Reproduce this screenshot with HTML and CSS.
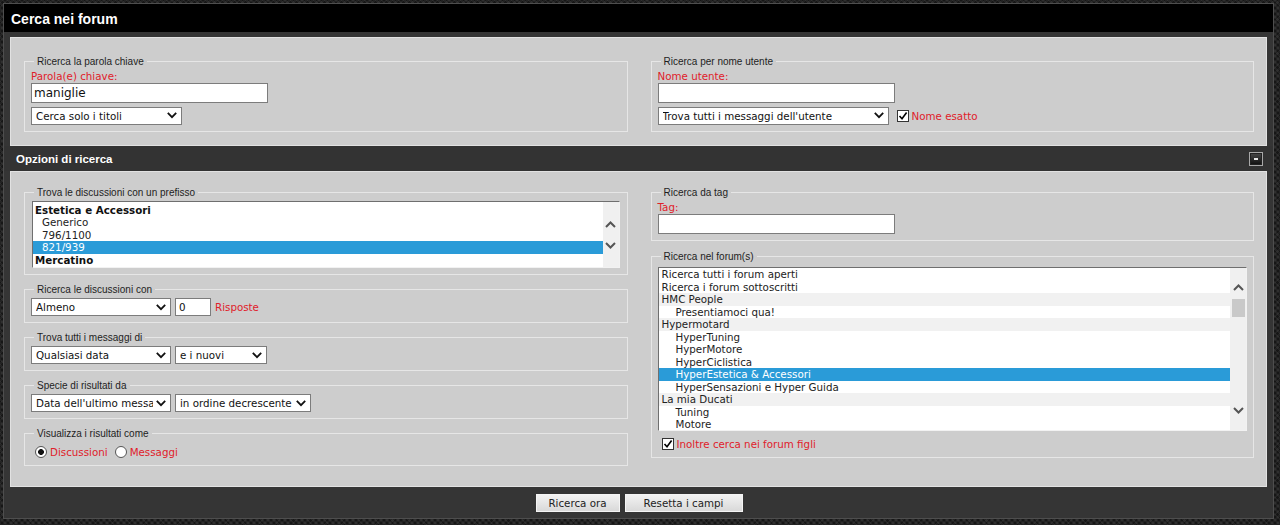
FILE: index.html
```html
<!DOCTYPE html>
<html lang="it">
<head>
<meta charset="utf-8">
<title>Cerca nei forum</title>
<link rel="stylesheet" href="styles.css">
</head>
<body>
<div class="frame">
  <div class="title-bar">Cerca nei forum</div>

  <div class="panel panel-top">
    <fieldset class="box">
      <legend>Ricerca la parola chiave</legend>
      <label class="lbl">Parola(e) chiave:</label>
      <input class="txt txt-main" type="text" value="maniglie">
      <div class="row">
        <select class="sel w151"><option>Cerca solo i titoli</option></select>
      </div>
    </fieldset>
    <fieldset class="box">
      <legend>Ricerca per nome utente</legend>
      <label class="lbl">Nome utente:</label>
      <input class="txt txt-main" type="text" value="">
      <div class="row">
        <select class="sel w231"><option>Trova tutti i messaggi dell'utente</option></select>
        <label class="chk chk-exact"><input type="checkbox" checked><span>Nome esatto</span></label>
      </div>
    </fieldset>
  </div>

  <div class="section-bar">
    <span class="section-title">Opzioni di ricerca</span>
    <span class="collapse"></span>
  </div>

  <div class="panel panel-opts">
    <div class="col col-left">
      <fieldset class="box">
        <legend>Trova le discussioni con un prefisso</legend>
        <div class="listbox lb-prefix">
          <div class="opts opts-prefix">
            <div class="opt grp">Estetica e Accessori</div>
            <div class="opt sub">Generico</div>
            <div class="opt sub">796/1100</div>
            <div class="opt sub selected">821/939</div>
            <div class="opt grp">Mercatino</div>
          </div>
          <div class="sb sb-prefix">
            <svg class="chev up" width="11" height="7" viewBox="0 0 11 7"><path d="M1 6 5.5 1.5 10 6" fill="none" stroke="#555" stroke-width="2"/></svg>
            <svg class="chev down" width="11" height="7" viewBox="0 0 11 7"><path d="M1 1 5.5 5.5 10 1" fill="none" stroke="#555" stroke-width="2"/></svg>
          </div>
        </div>
      </fieldset>

      <fieldset class="box">
        <legend>Ricerca le discussioni con</legend>
        <div class="row row-first">
          <select class="sel w140"><option>Almeno</option></select>
          <input class="txt txt-small" type="text" value="0">
          <span class="red">Risposte</span>
        </div>
      </fieldset>

      <fieldset class="box">
        <legend>Trova tutti i messaggi di</legend>
        <div class="row row-first">
          <select class="sel w140"><option>Qualsiasi data</option></select>
          <select class="sel w92"><option>e i nuovi</option></select>
        </div>
      </fieldset>

      <fieldset class="box">
        <legend>Specie di risultati da</legend>
        <div class="row row-first">
          <select class="sel w140"><option>Data dell'ultimo messaggio</option></select>
          <select class="sel w136"><option>in ordine decrescente</option></select>
        </div>
      </fieldset>

      <fieldset class="box">
        <legend>Visualizza i risultati come</legend>
        <div class="radios">
          <label class="rad"><input type="radio" name="show" checked><span>Discussioni</span></label>
          <label class="rad"><input type="radio" name="show"><span>Messaggi</span></label>
        </div>
      </fieldset>
    </div>

    <div class="col col-right">
      <fieldset class="box">
        <legend>Ricerca da tag</legend>
        <label class="lbl">Tag:</label>
        <input class="txt txt-main" type="text" value="">
      </fieldset>

      <fieldset class="box">
        <legend>Ricerca nel forum(s)</legend>
        <div class="listbox lb-forum">
          <div class="opts">
            <div class="opt top">Ricerca tutti i forum aperti</div>
            <div class="opt top">Ricerca i forum sottoscritti</div>
            <div class="opt cat">HMC People</div>
            <div class="opt child">Presentiamoci qua!</div>
            <div class="opt cat">Hypermotard</div>
            <div class="opt child">HyperTuning</div>
            <div class="opt child">HyperMotore</div>
            <div class="opt child">HyperCiclistica</div>
            <div class="opt child selected">HyperEstetica &amp; Accessori</div>
            <div class="opt child">HyperSensazioni e Hyper Guida</div>
            <div class="opt cat">La mia Ducati</div>
            <div class="opt child">Tuning</div>
            <div class="opt child">Motore</div>
          </div>
          <div class="sb sb-forum">
            <svg class="chev up" width="11" height="7" viewBox="0 0 11 7"><path d="M1 6 5.5 1.5 10 6" fill="none" stroke="#555" stroke-width="2"/></svg>
            <span class="thumb"></span>
            <svg class="chev down" width="11" height="7" viewBox="0 0 11 7"><path d="M1 1 5.5 5.5 10 1" fill="none" stroke="#555" stroke-width="2"/></svg>
          </div>
        </div>
        <label class="chk chk-children"><input type="checkbox" checked><span>Inoltre cerca nei forum figli</span></label>
      </fieldset>
    </div>
  </div>

  <div class="actions">
    <button class="btn btn-search" type="button">Ricerca ora</button>
    <button class="btn btn-reset" type="button">Resetta i campi</button>
  </div>
</div>
</body>
</html>
```

FILE: styles.css
```css
* { box-sizing: border-box; }

html, body { height: 100%; }

body {
  margin: 0;
  background-color: #222;
  background-image:
    repeating-linear-gradient(45deg, rgba(255,255,255,0.06) 0 2px, transparent 2px 4px),
    repeating-linear-gradient(-45deg, rgba(0,0,0,0.35) 0 2px, transparent 2px 4px);
  font-family: "DejaVu Sans", Verdana, sans-serif;
  font-size: 10.3px;
  color: #222;
}

.frame {
  margin: 3px 6px 0 3px;
  border: 1px solid #4e4e4e;
  background: #353535;
}

.title-bar {
  height: 28px;
  background: #000;
  color: #fff;
  font-family: "Liberation Sans", Arial, sans-serif;
  font-weight: bold;
  font-size: 14px;
  line-height: 25px;
  padding: 3px 0 0 7px;
}

.panel {
  margin: 0 6px;
  background: #cdcdcd;
  border: 1px solid #e2e2e2;
  display: grid;
  grid-template-columns: 1fr 1fr;
  column-gap: 23px;
  align-items: start;
  padding-left: 13px;
  padding-right: 12px;
}

.panel-top {
  margin-top: 5px;
  padding-top: 16.5px;
  padding-bottom: 13.5px;
}

.panel-opts {
  padding-top: 14px;
  padding-bottom: 20px;
}

.section-bar {
  height: 25px;
  background: #333;
  display: flex;
  align-items: center;
  justify-content: space-between;
  padding: 0 10px 0 12px;
}

.section-title {
  color: #fff;
  font-family: "Liberation Sans", Arial, sans-serif;
  font-weight: bold;
  font-size: 11.5px;
}

.collapse {
  width: 14px;
  height: 14px;
  border: 1px solid #a8a8a8;
  box-shadow: inset 0 0 0 1px #222;
  background: linear-gradient(#4a4a4a, #0e0e0e);
  display: flex;
  align-items: center;
  justify-content: center;
}
.collapse::after {
  content: "";
  width: 4px;
  height: 2px;
  background: #e8e8e8;
}

.box {
  margin: 0;
  min-width: 0;
  border: 1px solid #e6e6e6;
  padding: 2px 6px 6px;
}

.box legend {
  font-family: "Liberation Sans", Arial, sans-serif;
  font-size: 10px;
  line-height: 13px;
  color: #1e1e1e;
  padding: 0 3px;
  margin-left: 3px;
}

.lbl {
  display: block;
  line-height: 13px;
  color: #e0202a;
}

.red { color: #e0202a; }

.txt {
  display: block;
  border: 1px solid #7c7c7c;
  background: #fff;
  font-family: "DejaVu Sans", Verdana, sans-serif;
  color: #111;
  outline: none;
}

.txt-main {
  width: 237px;
  height: 20px;
  font-size: 12px;
  padding: 0 2px;
}

.txt-small {
  width: 36px;
  height: 18px;
  font-size: 10.3px;
  padding: 0 3px;
}

.row {
  display: flex;
  align-items: center;
  gap: 4px;
  margin-top: 4px;
}
.row-first { margin-top: 0; }

.sel {
  appearance: none;
  -webkit-appearance: none;
  height: 18px;
  border: 1px solid #7c7c7c;
  border-radius: 0;
  background: #fff url("data:image/svg+xml,%3Csvg xmlns='http://www.w3.org/2000/svg' width='10' height='7'%3E%3Cpath d='M.8.8 5 5.2 9.2.8' fill='none' stroke='%23111' stroke-width='1.8'/%3E%3C/svg%3E") no-repeat right 4px center;
  font-family: "DejaVu Sans", Verdana, sans-serif;
  font-size: 10.3px;
  color: #111;
  padding: 0 17px 0 4px;
  margin: 0;
  outline: none;
}

.w151 { width: 151px; }
.w231 { width: 231px; }
.w140 { width: 140px; }
.w92 { width: 92px; }
.w136 { width: 136px; }

.chk {
  display: flex;
  align-items: center;
  color: #e0202a;
}

.chk-exact { margin-left: 4px; }

.chk input,
.rad input {
  appearance: none;
  -webkit-appearance: none;
  margin: 0;
  background: #fff;
}

.chk input {
  width: 12px;
  height: 12px;
  border: 1px solid #333;
  background: #fff url("data:image/svg+xml,%3Csvg xmlns='http://www.w3.org/2000/svg' width='10' height='10'%3E%3Cpath d='M1.5 5 4 7.8 8.6 1.5' fill='none' stroke='%23000' stroke-width='1.6'/%3E%3C/svg%3E") no-repeat center;
  margin-right: 3px;
}

.chk-children {
  height: 15px;
  margin-top: 5px;
  margin-left: 4px;
}

.col {
  display: flex;
  flex-direction: column;
  gap: 8px;
}
.col-right { gap: 9px; }

.listbox {
  display: flex;
  border: 1px solid;
  border-color: #6f6f6f #f2f2f2 #f2f2f2 #6f6f6f;
  background: #fff;
  overflow: hidden;
}

.lb-prefix {
  height: 67px;
  margin: 0 1px;
}

.lb-forum {
  height: 164px;
  margin-top: 2px;
}

.opts {
  flex: 1;
  min-width: 0;
  overflow: hidden;
}

.opts-prefix { padding-top: 2px; }

.opt {
  height: 12.5px;
  line-height: 12.5px;
  white-space: nowrap;
  color: #222;
}

.opts-prefix .opt { height: 12.4px; line-height: 12.4px; }

.opt.grp { font-weight: bold; padding-left: 2px; color: #111; }
.opt.sub { padding-left: 9px; }
.opt.top { padding-left: 3px; }
.opt.cat { padding-left: 3px; background: #f1f1f1; }
.opt.child { padding-left: 17px; }

.opt.selected {
  background: #2a9bd8;
  color: #fff;
}

.sb {
  width: 16px;
  flex: none;
  background: #f0f0f0;
  display: flex;
  flex-direction: column;
  align-items: center;
}

.chev { display: block; flex: none; }

.sb-prefix { padding-top: 19px; }
.sb-prefix .down { margin-top: 14px; }

.sb-forum { padding-top: 16px; }
.sb-forum .thumb {
  width: 13px;
  height: 18px;
  background: #c9c9c9;
  margin-top: 8px;
  flex: none;
}
.sb-forum .down { margin-top: 90px; }

.radios {
  height: 17px;
  display: flex;
  align-items: center;
  padding-left: 4px;
  padding-top: 3px;
}

.rad {
  display: flex;
  align-items: center;
  color: #e0202a;
  margin-right: 7px;
}

.rad input {
  width: 12px;
  height: 12px;
  border: 1px solid #555;
  border-radius: 50%;
  margin-right: 3px;
}
.rad input:checked {
  background: radial-gradient(circle, #111 0 2.6px, #fff 3.2px);
}

.actions {
  display: flex;
  justify-content: center;
  gap: 5px;
  padding: 7px 0 6px;
  margin-left: 1px;
}

.btn {
  height: 18px;
  border: 1px solid #f4f4f4;
  background: linear-gradient(#f2f2f2, #d9d9d9);
  font-family: "DejaVu Sans", Verdana, sans-serif;
  font-size: 10.3px;
  color: #222;
  padding: 0;
  margin: 0;
}
.btn-search { width: 84px; }
.btn-reset { width: 118px; }
```
